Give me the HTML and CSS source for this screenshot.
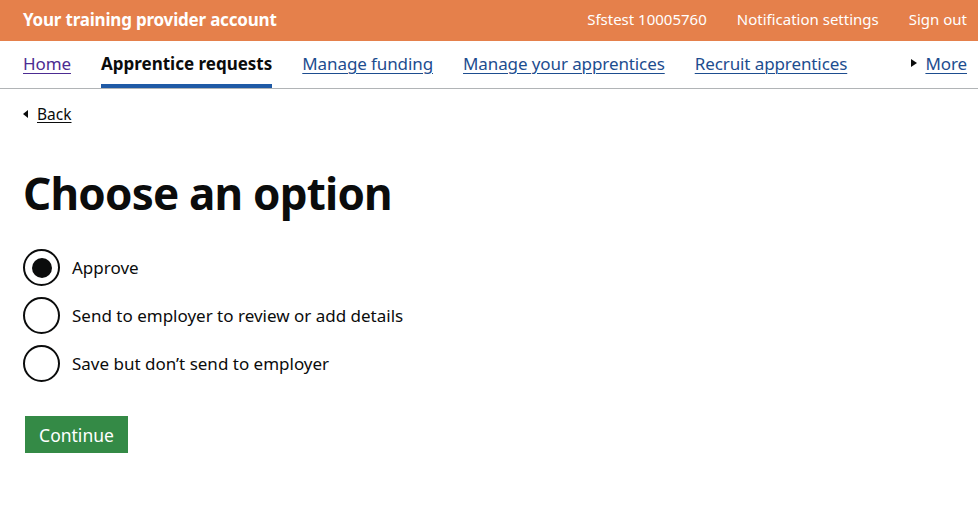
FILE: index.html
```html
<!DOCTYPE html>
<html lang="en">
<head>
<meta charset="utf-8">
<title>Choose an option</title>
<link rel="stylesheet" href="styles.css">
</head>
<body>
<header class="top">
  <a class="service" href="#">Your training provider account</a>
  <nav class="account">
    <a href="#">Sfstest 10005760</a>
    <a href="#">Notification settings</a>
    <a href="#">Sign out</a>
  </nav>
</header>
<nav class="mainnav">
  <a class="link" href="#">Home</a>
  <a class="current" href="#">Apprentice requests</a>
  <a class="link" href="#">Manage funding</a>
  <a class="link" href="#">Manage your apprentices</a>
  <a class="link" href="#">Recruit apprentices</a>
  <span class="more"><span class="tri"></span><a class="link" href="#">More</a></span>
</nav>
<main class="content">
  <a class="back" href="#"><span class="backtri"></span>Back</a>
  <h1 class="title">Choose an option</h1>
  <div class="radios">
    <label class="radio"><span class="circle checked"></span><span class="lbl">Approve</span></label>
    <label class="radio"><span class="circle"></span><span class="lbl">Send to employer to review or add details</span></label>
    <label class="radio"><span class="circle"></span><span class="lbl">Save but don’t send to employer</span></label>
  </div>
  <button class="btn">Continue</button>
</main>
</body>
</html>
```
FILE: styles.css
```css
* { box-sizing: border-box; }
body {
  margin: 0;
  font-family: "Noto Sans", "Liberation Sans", Arial, sans-serif;
  color: #0b0c0c;
  background: #fff;
}
a { color: inherit; }
.top {
  height: 41px;
  background: #e5804b;
  display: flex;
  align-items: center;
  justify-content: space-between;
  padding: 0 11px 3px 23px;
}
.service {
  color: #fff;
  font-weight: 700;
  font-size: 17px;
  text-decoration: none;
  letter-spacing: -0.2px;
}
.account { display: flex; gap: 30px; }
.account a {
  color: #fff;
  text-decoration: none;
  font-size: 15px;
}
.mainnav {
  height: 48px;
  border-bottom: 1px solid #b1b4b6;
  display: flex;
  align-items: stretch;
  padding: 0 11px 0 23px;
  gap: 30px;
  font-size: 17px;
}
.mainnav > a, .more {
  display: flex;
  align-items: center;
  padding-bottom: 3px;
}
.link { color: #1d4d8f; text-decoration: underline; text-underline-offset: 3px; text-decoration-thickness: 1px; letter-spacing: -0.1px; }
.mainnav .link:first-child { color: #4c2c92; }
.current {
  font-weight: 700;
  text-decoration: none;
  color: #0b0c0c;
  border-bottom: 4px solid #1f5aa6;
  padding-top: 1px;
  padding-bottom: 0 !important;
}
.more { margin-left: auto; gap: 8px; }
.tri {
  width: 0; height: 0;
  border-left: 6px solid #0b0c0c;
  border-top: 4px solid transparent;
  border-bottom: 4px solid transparent;
}
.content { padding: 0 23px; }
.back {
  display: inline-flex;
  align-items: center;
  gap: 9px;
  margin-top: 14px;
  font-size: 15.5px;
  color: #0b0c0c;
  text-underline-offset: 2px;
}
.backtri {
  width: 0; height: 0;
  border-right: 5px solid #0b0c0c;
  border-top: 4px solid transparent;
  border-bottom: 4px solid transparent;
}
.title {
  font-size: 44px;
  font-weight: 700;
  margin: 44px 0 32px;
  letter-spacing: -0.8px;
  line-height: 1.1;
}
.radios { display: flex; flex-direction: column; gap: 11px; }
.radio { display: flex; align-items: center; gap: 12px; font-size: 17px; }
.circle {
  width: 37px; height: 37px;
  border: 2.5px solid #0b0c0c;
  border-radius: 50%;
  display: flex;
  align-items: center;
  justify-content: center;
}
.circle.checked::after {
  content: "";
  width: 20px; height: 20px;
  border-radius: 50%;
  background: #0b0c0c;
}
.btn {
  margin: 34px 0 0 2px;
  background: #348a46;
  color: #fff;
  border: 0;
  box-shadow: 0 2px 0 #0e3b1a;
  font-family: inherit;
  font-size: 17.5px;
  height: 37px;
  width: 103px;
  padding: 0;
}
```
